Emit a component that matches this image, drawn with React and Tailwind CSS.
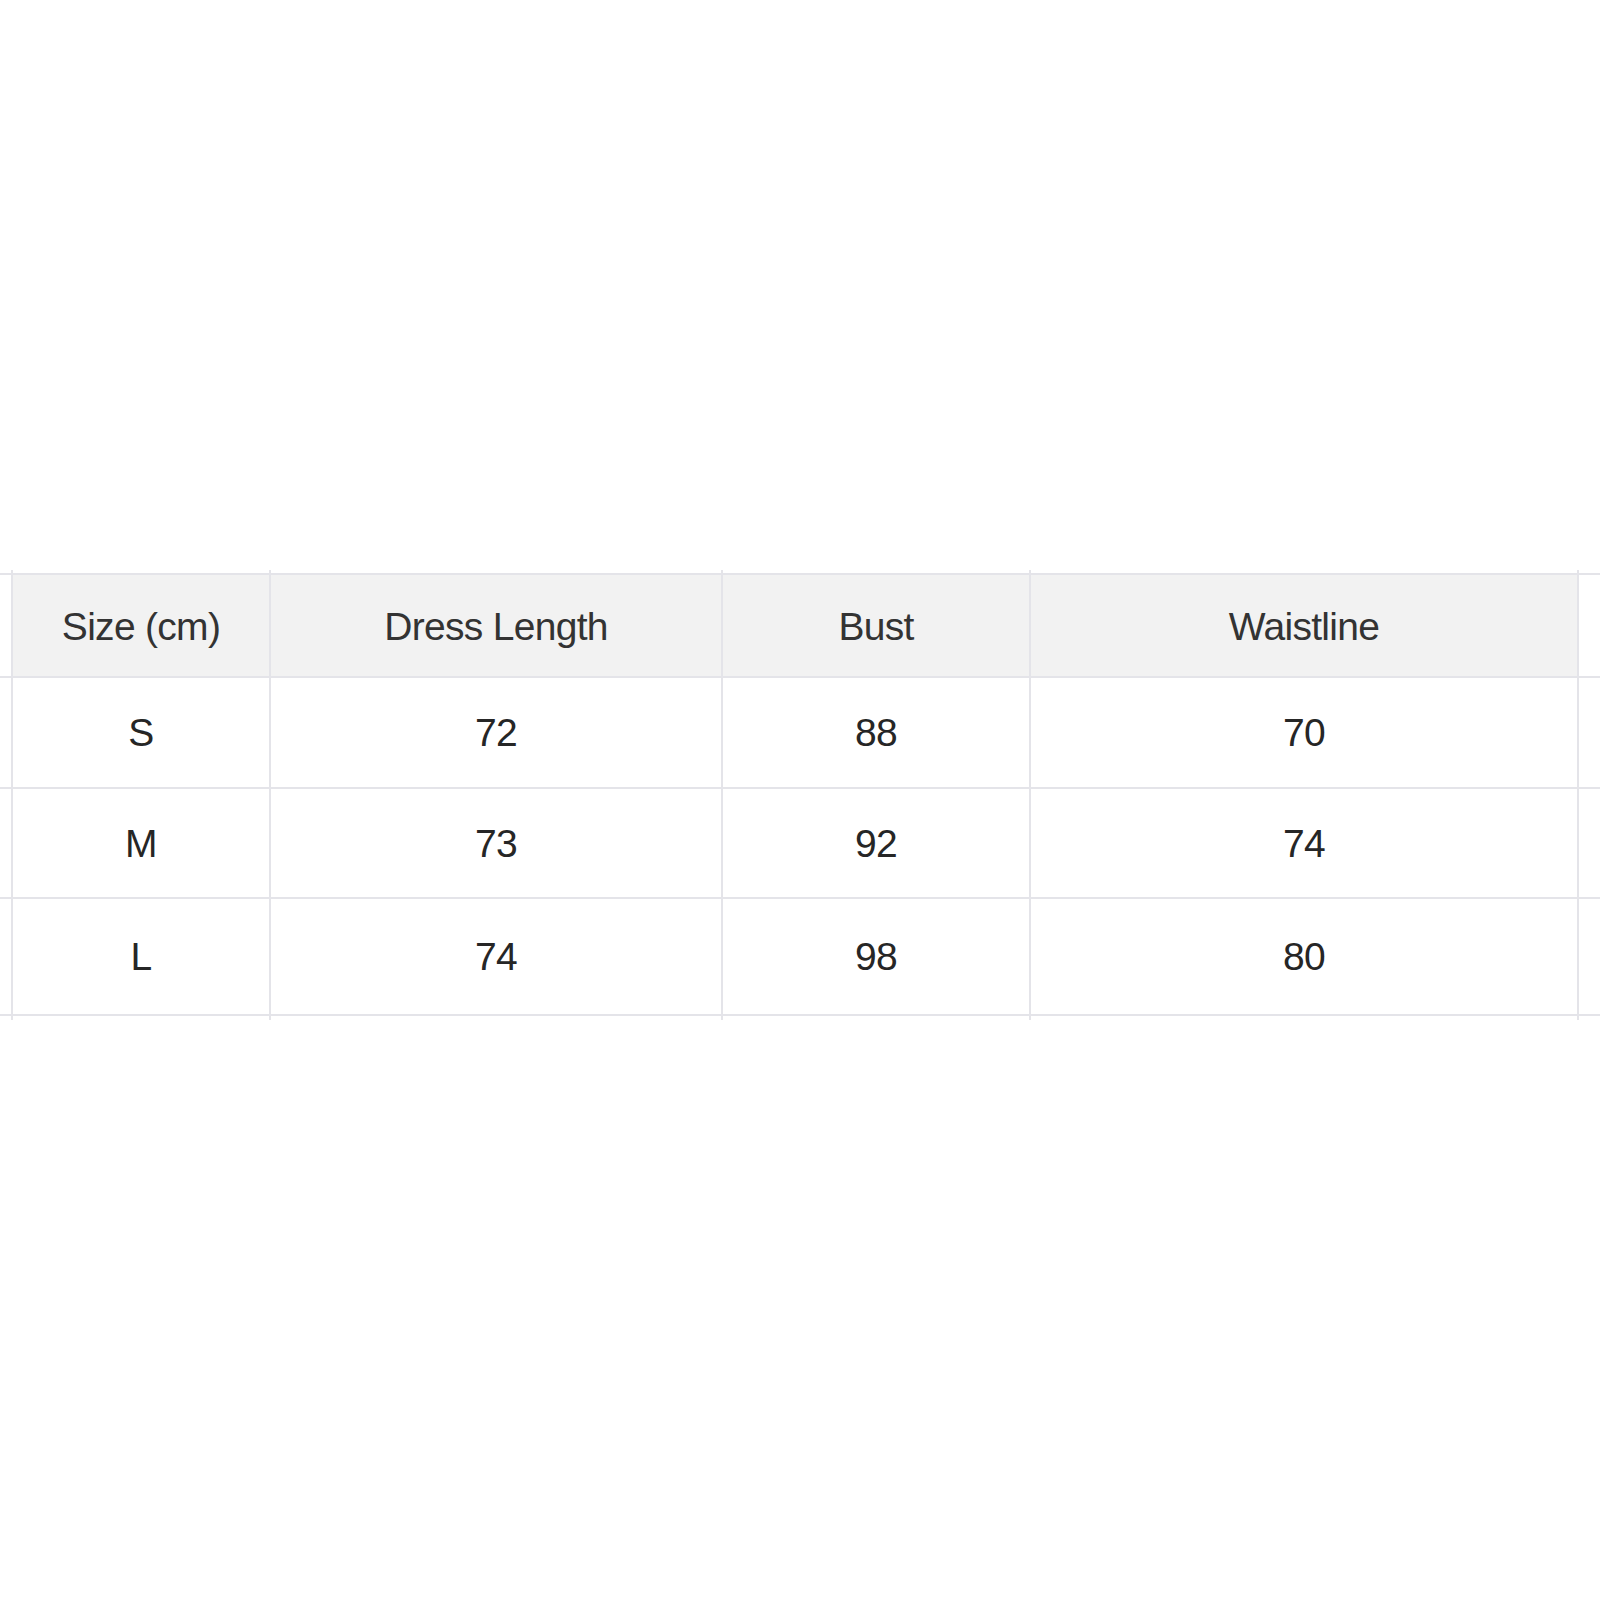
const headers = ['Size (cm)', 'Dress Length', 'Bust', 'Waistline'];

const rows = [
  { size: 'S', length: '72', bust: '88', waist: '70', h: 'h-[111px]' },
  { size: 'M', length: '73', bust: '92', waist: '74', h: 'h-[110px]' },
  { size: 'L', length: '74', bust: '98', waist: '80', h: 'h-[117px]' },
];

const line = 'border-[#e4e4e9]';

export default function App() {
  return (
    <div className="w-[1600px] h-[1600px] bg-white pt-[570px]" style={{ fontFamily: '"Liberation Sans", Arial, sans-serif' }}>
      <table className="w-[1600px] table-fixed border-collapse text-[39px] tracking-[-0.7px] text-[#262626]">
        <colgroup>
          <col className="w-[12px]" />
          <col className="w-[258px]" />
          <col className="w-[452px]" />
          <col className="w-[308px]" />
          <col className="w-[548px]" />
          <col className="w-[22px]" />
        </colgroup>
        <tbody>
          {/* line stubs above the header */}
          <tr className="h-[4px]">
            <td className="p-0" />
            {headers.map((h) => (
              <td key={h} className={`p-0 border-x-2 ${line}`} />
            ))}
            <td className="p-0" />
          </tr>
          <tr className="h-[103px]">
            <td className={`p-0 border-y-2 ${line}`} />
            {headers.map((h) => (
              <th key={h} className={`p-0 pt-[3px] font-normal text-center text-[#333] bg-[#f2f2f2] border-2 ${line}`}>
                {h}
              </th>
            ))}
            <td className={`p-0 border-y-2 ${line}`} />
          </tr>
          {rows.map((r) => (
            <tr key={r.size} className={r.h}>
              <td className={`p-0 border-y-2 ${line}`} />
              <td className={`p-0 pt-[2px] text-center border-2 ${line}`}>{r.size}</td>
              <td className={`p-0 pt-[2px] text-center border-2 ${line}`}>{r.length}</td>
              <td className={`p-0 pt-[2px] text-center border-2 ${line}`}>{r.bust}</td>
              <td className={`p-0 pt-[2px] text-center border-2 ${line}`}>{r.waist}</td>
              <td className={`p-0 border-y-2 ${line}`} />
            </tr>
          ))}
          {/* line stubs below the last row */}
          <tr className="h-[5px]">
            <td className="p-0" />
            {headers.map((h) => (
              <td key={h} className={`p-0 border-x-2 ${line}`} />
            ))}
            <td className="p-0" />
          </tr>
        </tbody>
      </table>
    </div>
  );
}
